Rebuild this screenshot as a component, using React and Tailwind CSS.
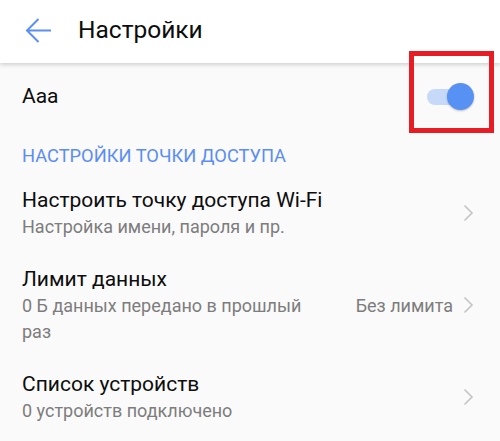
import { useState } from "react";

function Chevron() {
    return (
        <svg width="11" height="18" viewBox="0 0 11 18" className="shrink-0">
            <path d="M1.5 1.5 L9 9 L1.5 16.5" fill="none" stroke="#c4c4c4" strokeWidth="1.6" />
        </svg>
    );
}

function Item({ title, sub, right }) {
    return (
        <div className="flex items-center pl-[22px] pr-[26px] pt-[13px] pb-[12px]">
            <div className="flex-1 min-w-0">
                <div className="text-[21px] leading-[28px] text-[#0d0d0d]">{title}</div>
                <div className="text-[18px] leading-[26px] text-[#7d7d7d] max-w-[300px]">{sub}</div>
            </div>
            {right && (
                <span className="text-[18px] text-[#7d7d7d] mr-[10px] self-start mt-[28px] leading-[26px]">{right}</span>
            )}
            <div className={right ? "self-start mt-[31px]" : ""}>
                <Chevron />
            </div>
        </div>
    );
}

export default function App() {
    const [on, setOn] = useState(true);

    return (
        <div className="relative w-[500px] h-[441px] overflow-hidden bg-[#fafafa]" style={{ fontFamily: "Roboto, 'Noto Sans', sans-serif" }}>
            {/* HEADER */}
            <div className="h-[63px] bg-white flex items-center shadow-[0_2px_4px_rgba(0,0,0,0.16)] relative z-10">
                <svg width="27" height="27" viewBox="0 0 27 27" className="ml-[25px] mt-[-3px]">
                    <path d="M26 13.5 H2 M13.5 2 L2 13.5 L13.5 25" fill="none" stroke="#5b8ff0" strokeWidth="2" />
                </svg>
                <h1 className="ml-[26px] text-[24.5px] text-[#0d0d0d] mt-[-2px]">Настройки</h1>
            </div>

            {/* Aaa */}
            <div className="h-[67px] flex items-center pl-[22px] pr-[26px]">
                <span className="flex-1 text-[21px] text-[#0d0d0d]">Aaa</span>
                <button onClick={() => setOn(!on)} className="relative w-[47px] h-[27px] flex items-center">
                    <span className="absolute left-0 right-[4px] h-[16px] rounded-full bg-[#c6d9f8]" />
                    <span className="absolute right-[0px] w-[27px] h-[27px] rounded-full bg-[#5891f4] shadow-[0_1px_2px_rgba(0,0,0,0.25)]" />
                </button>
            </div>

            {/* SECCION */}
            <div className="pl-[22px] pt-[14px] pb-[5px] text-[18.3px] leading-[24px] text-[#5a8df5] uppercase">
                Настройки точки доступа
            </div>

            <Item title="Настроить точку доступа Wi-Fi" sub="Настройка имени, пароля и пр." />
            <Item title="Лимит данных" sub="0 Б данных передано в прошлый раз" right="Без лимита" />
            <Item title="Список устройств" sub="0 устройств подключено" />

            {/* red highlight */}
            <div className="absolute left-[409px] top-[51px] w-[85px] h-[82px] border-[5px] border-[#e81c24] z-20" />
        </div>
    );
}
